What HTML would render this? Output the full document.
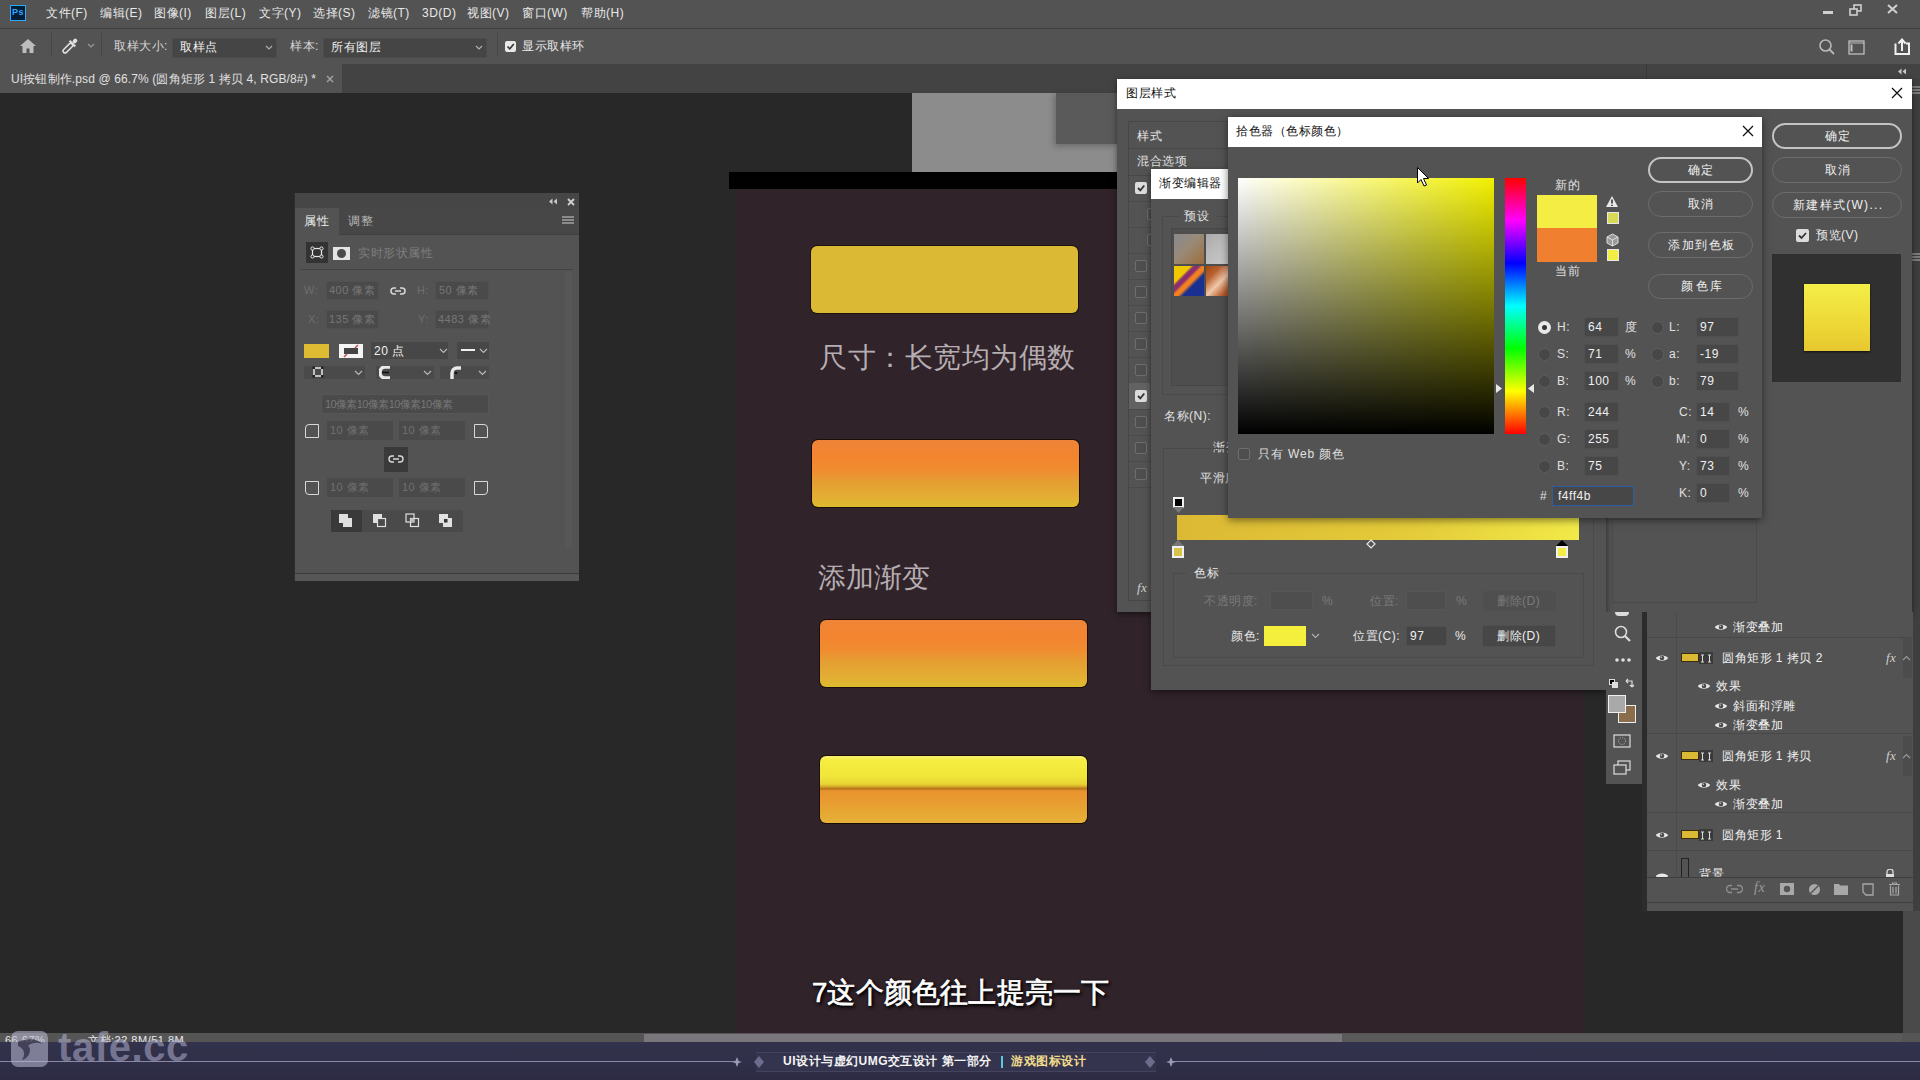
<!DOCTYPE html>
<html><head><meta charset="utf-8">
<style>
*{box-sizing:border-box;margin:0;padding:0}
html,body{width:1920px;height:1080px;overflow:hidden;background:#282828;font-family:"Liberation Sans",sans-serif;color:#e0e0e0}
.a{position:absolute}
.t{position:absolute;white-space:nowrap;line-height:1;letter-spacing:0.5px}
</style></head><body>
<!-- menubar -->
<div class="a" style="left:0;top:0;width:1920px;height:28px;background:#535353"></div>
<div class="a" style="left:0;top:28px;width:1920px;height:1px;background:#3d3d3d"></div>
<div class="a" style="left:0;top:29px;width:1920px;height:35px;background:#535353"></div>
<!-- tab bar -->
<div class="a" style="left:0;top:64px;width:1920px;height:29px;background:#434343"></div>
<div class="a" style="left:0;top:64px;width:342px;height:30px;background:#535353"></div>

<!-- PS logo -->
<div class="a" style="left:10px;top:5px;width:16px;height:16px;background:#001e36;border:1px solid #31a8ff"></div>
<div class="t" style="left:12px;top:8px;font-size:9px;color:#31a8ff;font-weight:bold">Ps</div>
<div class="t" style="left:46px;top:7px;font-size:12px;color:#e8e8e8">文件(F)</div>
<div class="t" style="left:100px;top:7px;font-size:12px;color:#e8e8e8">编辑(E)</div>
<div class="t" style="left:154px;top:7px;font-size:12px;color:#e8e8e8">图像(I)</div>
<div class="t" style="left:205px;top:7px;font-size:12px;color:#e8e8e8">图层(L)</div>
<div class="t" style="left:259px;top:7px;font-size:12px;color:#e8e8e8">文字(Y)</div>
<div class="t" style="left:313px;top:7px;font-size:12px;color:#e8e8e8">选择(S)</div>
<div class="t" style="left:368px;top:7px;font-size:12px;color:#e8e8e8">滤镜(T)</div>
<div class="t" style="left:422px;top:7px;font-size:12px;color:#e8e8e8">3D(D)</div>
<div class="t" style="left:467px;top:7px;font-size:12px;color:#e8e8e8">视图(V)</div>
<div class="t" style="left:522px;top:7px;font-size:12px;color:#e8e8e8">窗口(W)</div>
<div class="t" style="left:581px;top:7px;font-size:12px;color:#e8e8e8">帮助(H)</div>
<!-- window controls -->
<div class="a" style="left:1823px;top:11px;width:10px;height:3px;background:#d0d0d0"></div>
<svg class="a" style="left:1849px;top:4px" width="14" height="12"><rect x="5" y="1" width="7" height="6" fill="none" stroke="#d0d0d0" stroke-width="1.6"/><rect x="1" y="5" width="7" height="6" fill="#535353" stroke="#d0d0d0" stroke-width="1.6"/></svg>
<svg class="a" style="left:1887px;top:4px" width="11" height="10"><path d="M1 1L10 9M10 1L1 9" stroke="#d0d0d0" stroke-width="2"/></svg>
<!-- options bar -->
<svg class="a" style="left:19px;top:38px" width="18" height="16"><path d="M9 1L1 8H3.5V15H7.5V10.5H10.5V15H14.5V8H17Z" fill="#bdbdbd"/></svg>
<div class="a" style="left:51px;top:33px;width:1px;height:24px;background:#464646"></div>
<svg class="a" style="left:60px;top:36px" width="20" height="20"><g transform="rotate(45 10 10)"><rect x="8" y="7" width="4" height="12" rx="2" fill="none" stroke="#e0e0e0" stroke-width="1.5"/><rect x="6" y="5.5" width="8" height="2.2" fill="#e0e0e0"/><rect x="8" y="0.5" width="4" height="5" rx="2" fill="#e0e0e0"/></g></svg>
<svg class="a" style="left:87px;top:43px" width="8" height="6"><path d="M1 1L4 4L7 1" stroke="#9a9a9a" stroke-width="1.2" fill="none"/></svg>
<div class="a" style="left:101px;top:33px;width:1px;height:24px;background:#464646"></div>
<div class="t" style="left:114px;top:40px;font-size:12px;color:#d8d8d8">取样大小:</div>
<div class="a" style="left:172px;top:38px;width:105px;height:20px;background:#454545;border:1px solid #4c4c4c"></div>
<div class="t" style="left:180px;top:41px;font-size:12px;color:#f0f0f0">取样点</div>
<svg class="a" style="left:265px;top:45px" width="8" height="6"><path d="M1 1L4 4L7 1" stroke="#b0b0b0" stroke-width="1.2" fill="none"/></svg>
<div class="t" style="left:290px;top:40px;font-size:12px;color:#d8d8d8">样本:</div>
<div class="a" style="left:323px;top:38px;width:164px;height:20px;background:#454545;border:1px solid #4c4c4c"></div>
<div class="t" style="left:331px;top:41px;font-size:12px;color:#f0f0f0">所有图层</div>
<svg class="a" style="left:475px;top:45px" width="8" height="6"><path d="M1 1L4 4L7 1" stroke="#b0b0b0" stroke-width="1.2" fill="none"/></svg>
<div class="a" style="left:497px;top:33px;width:1px;height:24px;background:#464646"></div>
<div class="a" style="left:505px;top:41px;width:11px;height:11px;background:#e8e8e8;border-radius:2px"></div>
<svg class="a" style="left:506px;top:42px" width="9" height="9"><path d="M1.5 4.5L3.8 6.8L7.8 2" stroke="#333" stroke-width="1.6" fill="none"/></svg>
<div class="t" style="left:522px;top:40px;font-size:12px;color:#e8e8e8">显示取样环</div>
<svg class="a" style="left:1818px;top:38px" width="18" height="18"><circle cx="7.5" cy="7.5" r="5.5" stroke="#b8b8b8" stroke-width="1.6" fill="none"/><path d="M11.5 11.5L16 16" stroke="#b8b8b8" stroke-width="1.8"/></svg>
<svg class="a" style="left:1848px;top:40px" width="18" height="16"><rect x="1" y="1" width="15" height="13" stroke="#bdbdbd" stroke-width="1.3" fill="none"/><path d="M1 3H16" stroke="#bdbdbd" stroke-width="1"/><rect x="2.5" y="4.5" width="2" height="7" fill="#bdbdbd"/></svg>
<svg class="a" style="left:1892px;top:37px" width="20" height="19"><path d="M3.5 6.5V17H17V6.5H14" stroke="#f0f0f0" stroke-width="2" fill="none"/><path d="M10 14V3M6.5 6.5L10 2.5L13.5 6.5" stroke="#f0f0f0" stroke-width="2" fill="none"/></svg>
<!-- tab -->
<div class="t" style="left:11px;top:73px;font-size:12px;color:#e0e0e0;letter-spacing:0.13px">UI按钮制作.psd @ 66.7% (圆角矩形 1 拷贝 4, RGB/8#) *</div>
<svg class="a" style="left:326px;top:75px" width="8" height="8"><path d="M1 1L7 7M7 1L1 7" stroke="#a0a0a0" stroke-width="1.5"/></svg>

<!-- canvas bg -->
<div class="a" style="left:0;top:93px;width:1920px;height:940px;background:#282828"></div>
<!-- doc -->
<div class="a" style="left:735px;top:189px;width:848px;height:844px;background:#30232a"></div>
<div class="a" style="left:729px;top:172px;width:390px;height:17px;background:#020102"></div>
<div class="a" style="left:912px;top:93px;width:206px;height:79px;background:#8c8c8c"></div>
<div class="a" style="left:1056px;top:93px;width:62px;height:51px;background:#5a5a5a"></div>

<!-- doc content -->
<div class="a" style="left:1056px;top:93px;width:62px;height:51px;box-shadow:-2px 2px 6px rgba(0,0,0,.25)"></div>
<div class="a" style="left:810px;top:245px;width:269px;height:69px;border-radius:7px;background:#1c1210"></div>
<div class="a" style="left:811px;top:246px;width:267px;height:67px;border-radius:6px;background:#dcb934"></div>
<div class="t" style="left:819px;top:344px;font-size:28px;color:#b5adb1;letter-spacing:0.5px">尺寸：长宽均为偶数</div>
<div class="a" style="left:811px;top:439px;width:269px;height:69px;border-radius:7px;background:#1a0e0a"></div>
<div class="a" style="left:812px;top:440px;width:267px;height:67px;border-radius:6px;background:linear-gradient(#ef8438 0%,#f38530 25%,#f08c30 45%,#e59e32 62%,#e3ae34 85%,#dcbb2e 100%)"></div>
<div class="t" style="left:818px;top:564px;font-size:28px;color:#b5adb1;letter-spacing:0">添加渐变</div>
<div class="a" style="left:819px;top:619px;width:269px;height:69px;border-radius:7px;background:#1a0e0a"></div>
<div class="a" style="left:820px;top:620px;width:267px;height:67px;border-radius:6px;background:linear-gradient(#ef8438 0%,#f38530 25%,#f08c30 45%,#e59e32 62%,#e3ae34 85%,#dcbb2e 100%)"></div>
<div class="a" style="left:819px;top:755px;width:269px;height:69px;border-radius:7px;background:#1a0e08;filter:blur(0.6px)"></div>
<div class="a" style="left:820px;top:756px;width:267px;height:67px;border-radius:6px;background:linear-gradient(#f6f070 0%,#f6ee42 6%,#f1e63a 30%,#e8d434 42%,#dcb22a 45%,#b87c1e 48.5%,#c4801e 50%,#ea9430 52%,#e99a30 65%,#e6aa34 88%,#e6b23a 100%)"></div>
<div class="t" style="left:812px;top:979px;font-size:27.5px;font-weight:normal;-webkit-text-stroke:0.7px #fff;color:#fff;letter-spacing:0.2px;text-shadow:0 0 2px #000,2px 2px 3px #000,1px 2px 4px rgba(0,0,0,.8)">7这个颜色往上提亮一下</div>

<!-- properties panel -->
<div class="a" style="left:294px;top:193px;width:285px;height:388px;background:#535353"></div>
<div class="a" style="left:294px;top:193px;width:285px;height:15px;background:#464646"></div>
<div class="a" style="left:294px;top:208px;width:285px;height:27px;background:#474747"></div><div class="a" style="left:339px;top:234px;width:240px;height:1px;background:#3f3f3f"></div><div class="a" style="left:294px;top:193px;width:1px;height:388px;background:#2e2e2e"></div>
<div class="a" style="left:295px;top:208px;width:44px;height:27px;background:#535353"></div>
<svg class="a" style="left:548px;top:198px" width="10" height="7"><path d="M4.5 0.5L1 3.5L4.5 6.5ZM9 0.5L5.5 3.5L9 6.5Z" fill="#c8c8c8"/></svg>
<svg class="a" style="left:567px;top:198px" width="8" height="8"><path d="M1 1L7 7M7 1L1 7" stroke="#d0d0d0" stroke-width="1.8"/></svg>
<div class="t" style="left:304px;top:215px;font-size:12px;color:#f0f0f0">属性</div>
<div class="t" style="left:348px;top:215px;font-size:12px;color:#b8b8b8">调整</div>
<svg class="a" style="left:562px;top:216px" width="12" height="9"><path d="M0 1H12M0 4H12M0 7H12" stroke="#d0d0d0" stroke-width="1.2"/></svg>
<div class="a" style="left:306px;top:242px;width:22px;height:21px;background:#333"></div>
<svg class="a" style="left:310px;top:246px" width="14" height="13"><rect x="2.5" y="2.5" width="9" height="8" fill="none" stroke="#e8e8e8" stroke-width="1.2"/><g fill="#333" stroke="#e8e8e8" stroke-width="1"><circle cx="2.5" cy="2.5" r="1.6"/><circle cx="11.5" cy="2.5" r="1.6"/><circle cx="2.5" cy="10.5" r="1.6"/><circle cx="11.5" cy="10.5" r="1.6"/></g></svg>
<div class="a" style="left:333px;top:247px;width:17px;height:13px;background:#e4e4e4"></div>
<div class="a" style="left:337px;top:249px;width:9px;height:9px;border-radius:50%;background:#4a4a4a"></div>
<div class="t" style="left:358px;top:247px;font-size:12px;color:#7e7e7e">实时形状属性</div>
<div class="a" style="left:300px;top:269px;width:273px;height:1px;background:#444"></div>
<div class="a" style="left:565px;top:272px;width:7px;height:276px;background:#575757"></div>
<div class="t" style="left:304px;top:285px;font-size:11px;color:#6e6e6e">W:</div>
<div class="a" style="left:326px;top:281px;width:53px;height:19px;background:#4a4a4a;border:1px solid #505050"></div>
<div class="t" style="left:329px;top:285px;font-size:11px;color:#777">400 像素</div>
<svg class="a" style="left:390px;top:286px" width="16" height="10"><path d="M6 2H4A3 3 0 0 0 4 8H6M10 2H12A3 3 0 0 1 12 8H10M5 5H11" stroke="#d8d8d8" stroke-width="1.5" fill="none"/></svg>
<div class="t" style="left:417px;top:285px;font-size:11px;color:#6e6e6e">H:</div>
<div class="a" style="left:435px;top:281px;width:54px;height:19px;background:#4a4a4a;border:1px solid #505050"></div>
<div class="t" style="left:439px;top:285px;font-size:11px;color:#777">50 像素</div>
<div class="t" style="left:308px;top:314px;font-size:11px;color:#6e6e6e">X:</div>
<div class="a" style="left:326px;top:310px;width:53px;height:19px;background:#4a4a4a;border:1px solid #505050"></div>
<div class="t" style="left:329px;top:314px;font-size:11px;color:#777">135 像素</div>
<div class="t" style="left:418px;top:314px;font-size:11px;color:#6e6e6e">Y:</div>
<div class="a" style="left:435px;top:310px;width:54px;height:19px;background:#4a4a4a;border:1px solid #505050"></div>
<div class="t" style="left:438px;top:314px;font-size:11px;color:#777">4483 像素</div>
<div class="a" style="left:304px;top:344px;width:25px;height:14px;background:#dfbb33"></div>
<div class="a" style="left:339px;top:344px;width:24px;height:14px;background:#f4f4f4"></div>
<div class="a" style="left:344px;top:348px;width:14px;height:6px;background:#444"></div>
<svg class="a" style="left:339px;top:344px" width="24" height="14"><path d="M16 4L19 1M5 13L8 10" stroke="#c05050" stroke-width="1.5"/></svg>
<div class="a" style="left:371px;top:342px;width:77px;height:17px;background:#474747"></div>
<div class="t" style="left:374px;top:345px;font-size:12px;color:#f0f0f0">20 点</div>
<svg class="a" style="left:439px;top:348px" width="9" height="6"><path d="M1 1L4.5 4.5L8 1" stroke="#b8b8b8" stroke-width="1.2" fill="none"/></svg>
<div class="a" style="left:457px;top:342px;width:32px;height:17px;background:#474747"></div>
<div class="a" style="left:461px;top:349px;width:14px;height:2px;background:#f0f0f0"></div>
<svg class="a" style="left:479px;top:348px" width="9" height="6"><path d="M1 1L4.5 4.5L8 1" stroke="#b8b8b8" stroke-width="1.2" fill="none"/></svg>
<div class="a" style="left:304px;top:366px;width:61px;height:13px;background:#4a4a4a"></div>
<svg class="a" style="left:312px;top:366px" width="12" height="12"><rect x="2" y="2" width="8" height="8" fill="none" stroke="#e8e8e8" stroke-width="1.5"/><g fill="#222"><rect x="0.5" y="0.5" width="2.5" height="2.5"/><rect x="9" y="0.5" width="2.5" height="2.5"/><rect x="0.5" y="9" width="2.5" height="2.5"/><rect x="9" y="9" width="2.5" height="2.5"/></g></svg>
<svg class="a" style="left:354px;top:370px" width="9" height="6"><path d="M1 1L4.5 4.5L8 1" stroke="#b8b8b8" stroke-width="1.2" fill="none"/></svg>
<div class="a" style="left:376px;top:366px;width:58px;height:13px;background:#4a4a4a"></div>
<svg class="a" style="left:379px;top:366px" width="12" height="13"><path d="M11 1H6A5 5.5 0 0 0 6 12H11" fill="none" stroke="#e8e8e8" stroke-width="3.5"/><path d="M3 6.5H10" stroke="#111" stroke-width="1.5"/></svg>
<svg class="a" style="left:423px;top:370px" width="9" height="6"><path d="M1 1L4.5 4.5L8 1" stroke="#b8b8b8" stroke-width="1.2" fill="none"/></svg>
<div class="a" style="left:440px;top:366px;width:49px;height:13px;background:#4a4a4a"></div>
<svg class="a" style="left:450px;top:366px" width="12" height="13"><path d="M2 13V7A5 5 0 0 1 7 2H11" fill="none" stroke="#e8e8e8" stroke-width="3.5"/><circle cx="6" cy="7" r="1.3" fill="#111"/></svg>
<svg class="a" style="left:478px;top:370px" width="9" height="6"><path d="M1 1L4.5 4.5L8 1" stroke="#b8b8b8" stroke-width="1.2" fill="none"/></svg>
<div class="a" style="left:321px;top:394px;width:168px;height:20px;background:#4a4a4a;border:1px solid #575757"></div>
<div class="t" style="left:325px;top:399px;font-size:11px;color:#777;letter-spacing:-0.6px">10像素10像素10像素10像素</div>
<div class="a" style="left:305px;top:424px;width:14px;height:14px;border:1px solid #d8d8d8;border-radius:4px 0 0 0"></div>
<div class="a" style="left:327px;top:421px;width:66px;height:19px;background:#4a4a4a"></div>
<div class="t" style="left:330px;top:425px;font-size:11px;color:#707070">10 像素</div>
<div class="a" style="left:399px;top:421px;width:66px;height:19px;background:#4a4a4a"></div>
<div class="t" style="left:402px;top:425px;font-size:11px;color:#707070">10 像素</div>
<div class="a" style="left:474px;top:424px;width:14px;height:14px;border:1px solid #d8d8d8;border-radius:0 4px 0 0"></div>
<div class="a" style="left:384px;top:447px;width:24px;height:25px;background:#3a3a3a"></div>
<svg class="a" style="left:388px;top:454px" width="16" height="10"><path d="M6 2H4A3 3 0 0 0 4 8H6M10 2H12A3 3 0 0 1 12 8H10M5 5H11" stroke="#d8d8d8" stroke-width="1.4" fill="none"/></svg>
<div class="a" style="left:305px;top:481px;width:14px;height:14px;border:1px solid #d8d8d8;border-radius:0 0 0 4px"></div>
<div class="a" style="left:327px;top:478px;width:66px;height:19px;background:#4a4a4a"></div>
<div class="t" style="left:330px;top:482px;font-size:11px;color:#707070">10 像素</div>
<div class="a" style="left:399px;top:478px;width:66px;height:19px;background:#4a4a4a"></div>
<div class="t" style="left:402px;top:482px;font-size:11px;color:#707070">10 像素</div>
<div class="a" style="left:474px;top:481px;width:14px;height:14px;border:1px solid #d8d8d8;border-radius:0 0 4px 0"></div>
<div class="a" style="left:331px;top:510px;width:132px;height:22px;background:#4a4a4a"></div>
<div class="a" style="left:331px;top:510px;width:31px;height:22px;background:#3a3a3a"></div>
<svg class="a" style="left:338px;top:513px" width="16" height="16"><rect x="1" y="1" width="9" height="9" fill="#e0e0e0"/><rect x="5" y="5" width="9" height="9" fill="#e0e0e0"/></svg>
<svg class="a" style="left:372px;top:513px" width="16" height="16"><rect x="1" y="1" width="9" height="9" fill="#e0e0e0"/><rect x="5.5" y="5.5" width="8" height="8" fill="#4a4a4a" stroke="#e0e0e0" stroke-width="1.2"/></svg>
<svg class="a" style="left:405px;top:513px" width="16" height="16"><rect x="1" y="1" width="8" height="8" fill="none" stroke="#e0e0e0" stroke-width="1.2"/><rect x="5.5" y="5.5" width="8" height="8" fill="none" stroke="#e0e0e0" stroke-width="1.2"/><rect x="5.5" y="5.5" width="3.5" height="3.5" fill="#bbb"/></svg>
<svg class="a" style="left:438px;top:513px" width="16" height="16"><rect x="1" y="1" width="9" height="9" fill="#e0e0e0"/><rect x="5" y="5" width="9" height="9" fill="#e0e0e0"/><rect x="6" y="6" width="3.5" height="3.5" fill="#333"/></svg>
<div class="a" style="left:295px;top:573px;width:284px;height:1px;background:#3a3a3a"></div>
<div class="a" style="left:295px;top:574px;width:284px;height:7px;background:#575757"></div>
<!-- status -->
<div class="a" style="left:0;top:1033px;width:1920px;height:9px;background:#555"></div>
<div class="a" style="left:644px;top:1034px;width:698px;height:8px;background:#7a777c"></div>
<div class="a" style="left:1342px;top:1034px;width:560px;height:8px;background:#5a5a5a"></div>
<div class="t" style="left:5px;top:1035px;font-size:11px;color:#e8e8e8;height:7px;overflow:hidden">66.67%</div>
<div class="t" style="left:88px;top:1035px;font-size:11px;color:#e8e8e8;height:7px;overflow:hidden">文档:22.8M/51.8M</div>
<div class="a" style="left:0;top:1042px;width:1920px;height:38px;background:linear-gradient(#33324c,#302f48 60%,#2c2b43)"></div>
<div class="a" style="left:0;top:1061px;width:736px;height:1px;background:#8a88a8"></div>
<div class="a" style="left:1170px;top:1061px;width:750px;height:1px;background:#8a88a8"></div>
<div class="a" style="left:756px;top:1052px;width:400px;height:20px;background:#35344f;border-top:1px solid #44435e;border-bottom:1px solid #44435e"></div>
<svg class="a" style="left:731px;top:1056px" width="12" height="12"><path d="M6 1L8 6L6 11L4 6Z M1 6L6 4.5L11 6L6 7.5Z" fill="#9c9ab8"/></svg>
<svg class="a" style="left:752px;top:1055px" width="14" height="14"><path d="M7 1L12 7L7 13L2 7Z" fill="#6e6c8c"/></svg>
<svg class="a" style="left:1143px;top:1055px" width="14" height="14"><path d="M7 1L12 7L7 13L2 7Z" fill="#6e6c8c"/></svg>
<svg class="a" style="left:1165px;top:1056px" width="12" height="12"><path d="M6 1L8 6L6 11L4 6Z M1 6L6 4.5L11 6L6 7.5Z" fill="#9c9ab8"/></svg>
<div class="t" style="left:783px;top:1055px;font-size:12px;color:#f4f4f4;font-weight:bold">UI设计与虚幻UMG交互设计 第一部分</div>
<div class="a" style="left:1001px;top:1056px;width:2px;height:12px;background:#5cc8dc"></div>
<div class="t" style="left:1011px;top:1055px;font-size:12px;color:#f0dc8c;font-weight:bold">游戏图标设计</div>
<!-- watermark -->
<div class="a" style="left:11px;top:1031px;width:37px;height:36px;border-radius:7px;background:rgba(190,190,215,.55)"></div>
<svg class="a" style="left:14px;top:1036px" width="32" height="28"><path d="M4 6C12 2 24 2 28 8C24 6 18 6 14 10C18 12 16 22 8 24C12 18 10 12 4 10Z" fill="rgba(40,40,60,.7)"/></svg>
<div class="t" style="left:58px;top:1027px;font-size:40px;font-weight:bold;color:rgba(185,185,215,.5);letter-spacing:0.6px">tafe.cc</div>
<!-- right strip -->
<div class="a" style="left:1646px;top:64px;width:274px;height:15px;background:#434343"></div>
<div class="a" style="left:1646px;top:64px;width:1px;height:15px;background:#383838"></div>
<svg class="a" style="left:1897px;top:68px" width="10" height="7"><path d="M4.5 0.5L1 3.5L4.5 6.5ZM9 0.5L5.5 3.5L9 6.5Z" fill="#c8c8c8"/></svg>
<div class="a" style="left:1912px;top:79px;width:8px;height:954px;background:#3f3f3f"></div>
<svg class="a" style="left:1912px;top:86px" width="8" height="9"><path d="M0 1H8M0 4H8M0 7H8" stroke="#bbb" stroke-width="1"/></svg>
<svg class="a" style="left:1912px;top:253px" width="8" height="9"><path d="M0 1H8M0 4H8M0 7H8" stroke="#bbb" stroke-width="1"/></svg>
<div class="a" style="left:1646px;top:612px;width:1px;height:300px;background:#2f2f2f"></div>
<!-- layer style dialog -->
<div class="a" style="left:1117px;top:79px;width:795px;height:533px;background:#535353;box-shadow:0 2px 6px rgba(0,0,0,.5)"></div>
<div class="a" style="left:1117px;top:79px;width:795px;height:30px;background:#fff"></div>
<div class="t" style="left:1126px;top:87px;font-size:12px;color:#111">图层样式</div>
<svg class="a" style="left:1891px;top:87px" width="12" height="12"><path d="M1 1L11 11M11 1L1 11" stroke="#111" stroke-width="1.3"/></svg>
<!-- style list -->
<div class="a" style="left:1128px;top:121px;width:110px;height:480px;border:1px solid #474747;background:#535353"></div>
<div class="t" style="left:1137px;top:130px;font-size:12px;color:#e8e8e8">样式</div>
<div class="a" style="left:1129px;top:148px;width:108px;height:1px;background:#484848"></div>
<div class="t" style="left:1137px;top:155px;font-size:12px;color:#e0e0e0">混合选项</div>
<div class="a" style="left:1129px;top:175px;width:108px;height:1px;background:#484848"></div>
<div class="a" style="left:1129px;top:201px;width:108px;height:1px;background:#4a4a4a"></div>
<div class="a" style="left:1135px;top:182px;width:12px;height:12px;background:#dcdcdc;border-radius:2px"></div><svg class="a" style="left:1136px;top:183px" width="10" height="10"><path d="M2 5L4.3 7.3L8.3 2.5" stroke="#333" stroke-width="1.8" fill="none"/></svg>
<div class="a" style="left:1129px;top:227px;width:108px;height:1px;background:#4a4a4a"></div>
<div class="a" style="left:1147px;top:208px;width:12px;height:12px;border:1px solid #6e6e6e;border-radius:2px;background:#4e4e4e"></div>
<div class="a" style="left:1129px;top:253px;width:108px;height:1px;background:#4a4a4a"></div>
<div class="a" style="left:1147px;top:234px;width:12px;height:12px;border:1px solid #6e6e6e;border-radius:2px;background:#4e4e4e"></div>
<div class="a" style="left:1129px;top:279px;width:108px;height:1px;background:#4a4a4a"></div>
<div class="a" style="left:1135px;top:260px;width:12px;height:12px;border:1px solid #6e6e6e;border-radius:2px;background:#4e4e4e"></div>
<div class="a" style="left:1129px;top:305px;width:108px;height:1px;background:#4a4a4a"></div>
<div class="a" style="left:1135px;top:286px;width:12px;height:12px;border:1px solid #6e6e6e;border-radius:2px;background:#4e4e4e"></div>
<div class="a" style="left:1129px;top:331px;width:108px;height:1px;background:#4a4a4a"></div>
<div class="a" style="left:1135px;top:312px;width:12px;height:12px;border:1px solid #6e6e6e;border-radius:2px;background:#4e4e4e"></div>
<div class="a" style="left:1129px;top:357px;width:108px;height:1px;background:#4a4a4a"></div>
<div class="a" style="left:1135px;top:338px;width:12px;height:12px;border:1px solid #6e6e6e;border-radius:2px;background:#4e4e4e"></div>
<div class="a" style="left:1129px;top:383px;width:108px;height:1px;background:#4a4a4a"></div>
<div class="a" style="left:1135px;top:364px;width:12px;height:12px;border:1px solid #6e6e6e;border-radius:2px;background:#4e4e4e"></div>
<div class="a" style="left:1129px;top:409px;width:108px;height:1px;background:#4a4a4a"></div>
<div class="a" style="left:1135px;top:390px;width:12px;height:12px;background:#dcdcdc;border-radius:2px"></div><svg class="a" style="left:1136px;top:391px" width="10" height="10"><path d="M2 5L4.3 7.3L8.3 2.5" stroke="#333" stroke-width="1.8" fill="none"/></svg>
<div class="a" style="left:1129px;top:435px;width:108px;height:1px;background:#4a4a4a"></div>
<div class="a" style="left:1135px;top:416px;width:12px;height:12px;border:1px solid #6e6e6e;border-radius:2px;background:#4e4e4e"></div>
<div class="a" style="left:1129px;top:461px;width:108px;height:1px;background:#4a4a4a"></div>
<div class="a" style="left:1135px;top:442px;width:12px;height:12px;border:1px solid #6e6e6e;border-radius:2px;background:#4e4e4e"></div>
<div class="a" style="left:1129px;top:487px;width:108px;height:1px;background:#4a4a4a"></div>
<div class="a" style="left:1135px;top:468px;width:12px;height:12px;border:1px solid #6e6e6e;border-radius:2px;background:#4e4e4e"></div>
<div class="t" style="left:1137px;top:581px;font-size:13px;color:#d0d0d0;font-style:italic;font-family:'Liberation Serif',serif">fx</div>
<div class="a" style="left:1129px;top:383px;width:21px;height:26px;background:#626262"></div>
<div class="a" style="left:1135px;top:390px;width:12px;height:12px;background:#dcdcdc;border-radius:2px"></div><svg class="a" style="left:1136px;top:391px" width="10" height="10"><path d="M2 5L4.3 7.3L8.3 2.5" stroke="#333" stroke-width="1.8" fill="none"/></svg>
<!-- right column buttons -->
<div class="a" style="left:1772px;top:123px;width:130px;height:26px;border:2px solid #c4c4c4;border-radius:13px"></div>
<div class="t" style="left:1825px;top:130px;font-size:12px;color:#f0f0f0">确定</div>
<div class="a" style="left:1772px;top:157px;width:130px;height:26px;border:1.5px solid #6c6c6c;border-radius:13px"></div>
<div class="t" style="left:1825px;top:164px;font-size:12px;color:#f0f0f0">取消</div>
<div class="a" style="left:1772px;top:192px;width:130px;height:26px;border:1.5px solid #6c6c6c;border-radius:13px"></div>
<div class="t" style="left:1793px;top:199px;font-size:12px;color:#f0f0f0;letter-spacing:1.3px">新建样式(W)...</div>
<div class="a" style="left:1796px;top:229px;width:13px;height:13px;background:#dcdcdc;border-radius:2px"></div>
<svg class="a" style="left:1797px;top:230px" width="11" height="11"><path d="M2 5.5L4.5 8L9 3" stroke="#333" stroke-width="1.8" fill="none"/></svg>
<div class="t" style="left:1816px;top:229px;font-size:12px;color:#e8e8e8">预览(V)</div>
<div class="a" style="left:1772px;top:254px;width:129px;height:128px;background:#303030"></div>
<div class="a" style="left:1804px;top:284px;width:66px;height:67px;background:linear-gradient(#f4ee48,#ecd434 70%,#e6c830);box-shadow:0 1px 2px #111"></div>
<div class="a" style="left:1612px;top:519px;width:145px;height:84px;border:1px solid #4b4b4b"></div>
<!-- gradient editor -->
<div class="a" style="left:1151px;top:169px;width:455px;height:521px;background:#535353;box-shadow:0 2px 6px rgba(0,0,0,.5)"></div>
<div class="a" style="left:1151px;top:169px;width:455px;height:30px;background:#fff"></div>
<div class="t" style="left:1159px;top:177px;font-size:12px;color:#111">渐变编辑器</div>
<div class="a" style="left:1162px;top:216px;width:80px;height:179px;border:1px solid #4a4a4a"></div>
<div class="a" style="left:1179px;top:212px;width:38px;height:10px;background:#535353"></div>
<div class="t" style="left:1184px;top:210px;font-size:12px;color:#e0e0e0">预设</div>
<div class="a" style="left:1171px;top:228px;width:70px;height:158px;background:#4e4e4e;border:1px solid #474747"></div>
<div class="a" style="left:1174px;top:234px;width:30px;height:30px;background:linear-gradient(135deg,#8a8a8a 10%,#9a8a78 45%,#9c7040 95%)"></div>
<div class="a" style="left:1206px;top:234px;width:30px;height:30px;background:linear-gradient(135deg,#aaa 0%,#bbb 40%,rgba(220,220,220,.9) 100%)"></div>
<div class="a" style="left:1174px;top:266px;width:30px;height:30px;background:linear-gradient(135deg,#f0c800 0%,#f0c800 28%,#8a3070 34%,#8a3070 42%,#f08020 48%,#f08020 56%,#1a3090 64%,#1a3090 100%)"></div>
<div class="a" style="left:1206px;top:266px;width:30px;height:30px;background:linear-gradient(135deg,#a04810 0%,#b86030 25%,#f0c8a8 50%,#b86030 75%,#8a3c10 100%)"></div>
<div class="t" style="left:1164px;top:410px;font-size:12px;color:#e0e0e0">名称(N):</div>
<div class="t" style="left:1213px;top:441px;font-size:12px;color:#e0e0e0">渐变类型</div>
<div class="t" style="left:1200px;top:472px;font-size:12px;color:#e0e0e0">平滑度</div>
<div class="a" style="left:1163px;top:448px;width:431px;height:1px;background:#4a4a4a"></div>
<div class="a" style="left:1163px;top:448px;width:1px;height:218px;background:#4a4a4a"></div>
<div class="a" style="left:1163px;top:665px;width:431px;height:1px;background:#4a4a4a"></div>
<div class="a" style="left:1593px;top:448px;width:1px;height:218px;background:#4a4a4a"></div>
<!-- gradient bar -->
<div class="a" style="left:1177px;top:515px;width:402px;height:25px;background:linear-gradient(90deg,#dcb934,#e4cc3a 60%,#f2ea48)"></div>
<div class="a" style="left:1173px;top:497px;width:11px;height:11px;background:#000;border:2px solid #f0f0f0"></div>
<svg class="a" style="left:1173px;top:507px" width="11" height="8"><path d="M0 0H11L5.5 6Z" fill="#777"/></svg>
<svg class="a" style="left:1172px;top:540px" width="12" height="6"><path d="M0 6H12L6 0Z" fill="#777"/></svg>
<div class="a" style="left:1172px;top:546px;width:12px;height:12px;background:#d8c24a;border:2px solid #f0f0f0"></div>
<svg class="a" style="left:1366px;top:539px" width="10" height="10"><path d="M5 1L9 5L5 9L1 5Z" fill="none" stroke="#e8e8e8" stroke-width="1.2"/></svg>
<svg class="a" style="left:1556px;top:540px" width="12" height="6"><path d="M0 6H12L6 0Z" fill="#000"/></svg>
<div class="a" style="left:1556px;top:546px;width:12px;height:12px;background:#f4ee44;border:2px solid #f0f0f0"></div>
<!-- 色标 group -->
<div class="a" style="left:1173px;top:573px;width:411px;height:85px;border:1px solid #4a4a4a"></div>
<div class="a" style="left:1186px;top:566px;width:40px;height:14px;background:#535353"></div>
<div class="t" style="left:1194px;top:567px;font-size:12px;color:#e8e8e8">色标</div>
<div class="t" style="left:1204px;top:595px;font-size:12px;color:#7a7a7a">不透明度:</div>
<div class="a" style="left:1270px;top:591px;width:43px;height:19px;background:#4e4e4e;border:1px solid #565656"></div>
<div class="t" style="left:1322px;top:595px;font-size:12px;color:#7a7a7a">%</div>
<div class="t" style="left:1370px;top:595px;font-size:12px;color:#7a7a7a">位置:</div>
<div class="a" style="left:1406px;top:591px;width:40px;height:19px;background:#4e4e4e;border:1px solid #565656"></div>
<div class="t" style="left:1456px;top:595px;font-size:12px;color:#7a7a7a">%</div>
<div class="a" style="left:1483px;top:591px;width:73px;height:20px;background:#4f4f4f"></div>
<div class="t" style="left:1497px;top:595px;font-size:12px;color:#7a7a7a">删除(D)</div>
<div class="t" style="left:1231px;top:630px;font-size:12px;color:#e8e8e8">颜色:</div>
<div class="a" style="left:1264px;top:626px;width:42px;height:20px;background:#f4ee3c"></div>
<svg class="a" style="left:1311px;top:633px" width="9" height="6"><path d="M1 1L4.5 4.5L8 1" stroke="#b0b0b0" stroke-width="1.2" fill="none"/></svg>
<div class="t" style="left:1353px;top:630px;font-size:12px;color:#e8e8e8">位置(C):</div>
<div class="a" style="left:1406px;top:626px;width:41px;height:20px;background:#454545;border:1px solid #4f4f4f"></div>
<div class="t" style="left:1410px;top:630px;font-size:12px;color:#f0f0f0">97</div>
<div class="t" style="left:1455px;top:630px;font-size:12px;color:#e8e8e8">%</div>
<div class="a" style="left:1482px;top:625px;width:74px;height:22px;background:#474747;border:1px solid #4f4f4f"></div>
<div class="t" style="left:1497px;top:630px;font-size:12px;color:#f0f0f0">删除(D)</div>
<!-- color picker -->
<div class="a" style="left:1228px;top:117px;width:534px;height:401px;background:#535353;box-shadow:0 2px 8px rgba(0,0,0,.5)"></div>
<div class="a" style="left:1228px;top:117px;width:534px;height:30px;background:#fff"></div>
<div class="t" style="left:1236px;top:125px;font-size:12px;color:#111">拾色器（色标颜色）</div>
<svg class="a" style="left:1742px;top:125px" width="12" height="12"><path d="M1 1L11 11M11 1L1 11" stroke="#111" stroke-width="1.3"/></svg>
<div class="a" style="left:1238px;top:178px;width:256px;height:256px;background:linear-gradient(to bottom,rgba(0,0,0,0),#000),linear-gradient(to right,#fff,#f2f000)"></div>
<div class="a" style="left:1505px;top:178px;width:21px;height:256px;background:linear-gradient(#ff0000 0%,#ff00ff 16.67%,#0000ff 33.33%,#00ffff 50%,#00ff00 66.67%,#ffff00 83.33%,#ff0000 100%)"></div>
<svg class="a" style="left:1496px;top:384px" width="7" height="9"><path d="M0 0L6 4.5L0 9Z" fill="#e8e8e8"/></svg>
<svg class="a" style="left:1527px;top:384px" width="7" height="9"><path d="M7 0L1 4.5L7 9Z" fill="#e8e8e8"/></svg>
<svg class="a" style="left:1416px;top:166px" width="14" height="22"><path d="M1.5 1.5V17L5 13.5L8 20L10.5 19L7.5 12.5H12.5Z" fill="#fff" stroke="#000" stroke-width="1"/></svg>
<div class="a" style="left:1238px;top:448px;width:12px;height:12px;border:1px solid #6e6e6e;border-radius:2px;background:#4e4e4e"></div>
<div class="t" style="left:1258px;top:448px;font-size:12px;color:#e0e0e0;letter-spacing:0.9px">只有 Web 颜色</div>
<div class="t" style="left:1555px;top:179px;font-size:12px;color:#e0e0e0">新的</div>
<div class="a" style="left:1537px;top:195px;width:60px;height:33px;background:#f4ee44"></div>
<div class="a" style="left:1537px;top:228px;width:60px;height:34px;background:#f08030"></div>
<div class="t" style="left:1555px;top:265px;font-size:12px;color:#e0e0e0">当前</div>
<svg class="a" style="left:1605px;top:195px" width="14" height="13"><path d="M7 1L13 12H1Z" fill="#e8e8e8"/><path d="M7 4.5V8.5M7 9.8V11" stroke="#333" stroke-width="1.6"/></svg>
<div class="a" style="left:1607px;top:212px;width:12px;height:12px;background:#d8da56;border:1px solid #e8e8e8"></div>
<svg class="a" style="left:1606px;top:233px" width="13" height="14"><path d="M6.5 1L12 4V10L6.5 13L1 10V4Z" fill="#9a9a9a" stroke="#dcdcdc" stroke-width="1"/><path d="M1 4L6.5 7L12 4M6.5 7V13" stroke="#dcdcdc" stroke-width="1" fill="none"/></svg>
<div class="a" style="left:1607px;top:249px;width:12px;height:12px;background:#f4ee44;border:1px solid #e8e8e8"></div>
<div class="a" style="left:1648px;top:157px;width:105px;height:26px;border:2px solid #c4c4c4;border-radius:13px"></div>
<div class="t" style="left:1688px;top:164px;font-size:12px;color:#f0f0f0">确定</div>
<div class="a" style="left:1648px;top:191px;width:105px;height:26px;border:1.5px solid #6c6c6c;border-radius:13px"></div>
<div class="t" style="left:1688px;top:198px;font-size:12px;color:#f0f0f0">取消</div>
<div class="a" style="left:1648px;top:232px;width:105px;height:26px;border:1.5px solid #6c6c6c;border-radius:13px"></div>
<div class="t" style="left:1668px;top:239px;font-size:12px;color:#f0f0f0;letter-spacing:1.5px">添加到色板</div>
<div class="a" style="left:1648px;top:274px;width:105px;height:25px;border:1.5px solid #6c6c6c;border-radius:13px"></div>
<div class="t" style="left:1681px;top:280px;font-size:12px;color:#f0f0f0;letter-spacing:2.5px">颜色库</div>
<div class="a" style="left:1538px;top:321px;width:13px;height:13px;border-radius:50%;background:#e8e8e8"></div><div class="a" style="left:1542px;top:325px;width:5px;height:5px;border-radius:50%;background:#333"></div>
<div class="t" style="left:1557px;top:321px;font-size:12px;color:#e0e0e0">H:</div>
<div class="a" style="left:1584px;top:317px;width:35px;height:20px;background:#474747;border:1px solid #505050"></div><div class="t" style="left:1588px;top:321px;font-size:12px;color:#f0f0f0">64</div>
<div class="t" style="left:1625px;top:321px;font-size:12px;color:#e0e0e0">度</div>
<div class="a" style="left:1651px;top:321px;width:13px;height:13px;border-radius:50%;background:#474747;border:1px solid #5e5e5e"></div>
<div class="t" style="left:1669px;top:321px;font-size:12px;color:#e0e0e0">L:</div>
<div class="a" style="left:1696px;top:317px;width:43px;height:20px;background:#474747;border:1px solid #505050"></div><div class="t" style="left:1700px;top:321px;font-size:12px;color:#f0f0f0">97</div>
<div class="a" style="left:1538px;top:348px;width:13px;height:13px;border-radius:50%;background:#474747;border:1px solid #5e5e5e"></div>
<div class="t" style="left:1557px;top:348px;font-size:12px;color:#e0e0e0">S:</div>
<div class="a" style="left:1584px;top:344px;width:35px;height:20px;background:#474747;border:1px solid #505050"></div><div class="t" style="left:1588px;top:348px;font-size:12px;color:#f0f0f0">71</div>
<div class="t" style="left:1625px;top:348px;font-size:12px;color:#e0e0e0">%</div>
<div class="a" style="left:1651px;top:348px;width:13px;height:13px;border-radius:50%;background:#474747;border:1px solid #5e5e5e"></div>
<div class="t" style="left:1669px;top:348px;font-size:12px;color:#e0e0e0">a:</div>
<div class="a" style="left:1696px;top:344px;width:43px;height:20px;background:#474747;border:1px solid #505050"></div><div class="t" style="left:1700px;top:348px;font-size:12px;color:#f0f0f0">-19</div>
<div class="a" style="left:1538px;top:375px;width:13px;height:13px;border-radius:50%;background:#474747;border:1px solid #5e5e5e"></div>
<div class="t" style="left:1557px;top:375px;font-size:12px;color:#e0e0e0">B:</div>
<div class="a" style="left:1584px;top:371px;width:35px;height:20px;background:#474747;border:1px solid #505050"></div><div class="t" style="left:1588px;top:375px;font-size:12px;color:#f0f0f0">100</div>
<div class="t" style="left:1625px;top:375px;font-size:12px;color:#e0e0e0">%</div>
<div class="a" style="left:1651px;top:375px;width:13px;height:13px;border-radius:50%;background:#474747;border:1px solid #5e5e5e"></div>
<div class="t" style="left:1669px;top:375px;font-size:12px;color:#e0e0e0">b:</div>
<div class="a" style="left:1696px;top:371px;width:43px;height:20px;background:#474747;border:1px solid #505050"></div><div class="t" style="left:1700px;top:375px;font-size:12px;color:#f0f0f0">79</div>
<div class="a" style="left:1538px;top:406px;width:13px;height:13px;border-radius:50%;background:#474747;border:1px solid #5e5e5e"></div>
<div class="t" style="left:1557px;top:406px;font-size:12px;color:#e0e0e0">R:</div>
<div class="a" style="left:1584px;top:402px;width:35px;height:20px;background:#474747;border:1px solid #505050"></div><div class="t" style="left:1588px;top:406px;font-size:12px;color:#f0f0f0">244</div>
<div class="t" style="left:1679px;top:406px;font-size:12px;color:#e0e0e0">C:</div>
<div class="a" style="left:1696px;top:402px;width:34px;height:20px;background:#474747;border:1px solid #505050"></div><div class="t" style="left:1700px;top:406px;font-size:12px;color:#f0f0f0">14</div>
<div class="t" style="left:1738px;top:406px;font-size:12px;color:#e0e0e0">%</div>
<div class="a" style="left:1538px;top:433px;width:13px;height:13px;border-radius:50%;background:#474747;border:1px solid #5e5e5e"></div>
<div class="t" style="left:1557px;top:433px;font-size:12px;color:#e0e0e0">G:</div>
<div class="a" style="left:1584px;top:429px;width:35px;height:20px;background:#474747;border:1px solid #505050"></div><div class="t" style="left:1588px;top:433px;font-size:12px;color:#f0f0f0">255</div>
<div class="t" style="left:1676px;top:433px;font-size:12px;color:#e0e0e0">M:</div>
<div class="a" style="left:1696px;top:429px;width:34px;height:20px;background:#474747;border:1px solid #505050"></div><div class="t" style="left:1700px;top:433px;font-size:12px;color:#f0f0f0">0</div>
<div class="t" style="left:1738px;top:433px;font-size:12px;color:#e0e0e0">%</div>
<div class="a" style="left:1538px;top:460px;width:13px;height:13px;border-radius:50%;background:#474747;border:1px solid #5e5e5e"></div>
<div class="t" style="left:1557px;top:460px;font-size:12px;color:#e0e0e0">B:</div>
<div class="a" style="left:1584px;top:456px;width:35px;height:20px;background:#474747;border:1px solid #505050"></div><div class="t" style="left:1588px;top:460px;font-size:12px;color:#f0f0f0">75</div>
<div class="t" style="left:1679px;top:460px;font-size:12px;color:#e0e0e0">Y:</div>
<div class="a" style="left:1696px;top:456px;width:34px;height:20px;background:#474747;border:1px solid #505050"></div><div class="t" style="left:1700px;top:460px;font-size:12px;color:#f0f0f0">73</div>
<div class="t" style="left:1738px;top:460px;font-size:12px;color:#e0e0e0">%</div>
<div class="t" style="left:1540px;top:490px;font-size:12px;color:#e0e0e0">#</div>
<div class="a" style="left:1552px;top:486px;width:82px;height:20px;background:#474747;border:1.5px solid #2e5da6"></div><div class="t" style="left:1558px;top:490px;font-size:12px;color:#f0f0f0">f4ff4b</div>
<div class="t" style="left:1679px;top:487px;font-size:12px;color:#e0e0e0">K:</div>
<div class="a" style="left:1696px;top:483px;width:34px;height:20px;background:#474747;border:1px solid #505050"></div><div class="t" style="left:1700px;top:487px;font-size:12px;color:#f0f0f0">0</div>
<div class="t" style="left:1738px;top:487px;font-size:12px;color:#e0e0e0">%</div>
<!-- layers panel -->
<div class="a" style="left:1903px;top:911px;width:17px;height:122px;background:#4a4a4a"></div>

<div class="a" style="left:1606px;top:612px;width:36px;height:172px;background:#535353"></div>
<div class="a" style="left:1642px;top:612px;width:5px;height:300px;background:#2c2c2c"></div>
<div class="a" style="left:1647px;top:612px;width:266px;height:299px;background:#535353"></div>
<div class="a" style="left:1676px;top:612px;width:1px;height:265px;background:#4b4b4b"></div>
<div class="a" style="left:1615px;top:612px;width:14px;height:4px;background:#dcdcdc;border-radius:0 0 4px 4px"></div>
<svg class="a" style="left:1614px;top:625px" width="18" height="18"><circle cx="7" cy="7" r="5.5" stroke="#dcdcdc" stroke-width="1.6" fill="none"/><path d="M11 11L16 16" stroke="#dcdcdc" stroke-width="2.2"/></svg>
<svg class="a" style="left:1614px;top:657px" width="18" height="6"><circle cx="3" cy="3" r="1.8" fill="#e0e0e0"/><circle cx="9" cy="3" r="1.8" fill="#e0e0e0"/><circle cx="15" cy="3" r="1.8" fill="#e0e0e0"/></svg>
<div class="a" style="left:1609px;top:679px;width:6px;height:6px;background:#000;border:1px solid #ddd"></div><div class="a" style="left:1612px;top:682px;width:6px;height:6px;background:#ddd"></div>
<svg class="a" style="left:1624px;top:678px" width="11" height="11"><path d="M2 3H8V9M2 3L4 1M2 3L4 5M8 9L6 7M8 9L10 7" stroke="#ddd" stroke-width="1.2" fill="none"/></svg>
<div class="a" style="left:1618px;top:705px;width:18px;height:18px;background:#8a6e4c;border:1px solid #eee"></div>
<div class="a" style="left:1608px;top:695px;width:18px;height:18px;background:#a9a9a9;border:1px solid #f0f0f0"></div>
<svg class="a" style="left:1613px;top:734px" width="18" height="14"><rect x="1" y="1" width="16" height="12" fill="none" stroke="#ddd" stroke-width="1.2"/><circle cx="9" cy="7" r="3.5" fill="none" stroke="#aaa" stroke-dasharray="1 1"/></svg>
<svg class="a" style="left:1613px;top:760px" width="18" height="15"><rect x="5" y="1" width="12" height="9" fill="#535353" stroke="#ddd" stroke-width="1.2"/><rect x="1" y="5" width="12" height="9" fill="#535353" stroke="#ddd" stroke-width="1.2"/></svg>
<svg class="a" style="left:1714px;top:622px" width="14" height="10"><path d="M0.8 5C3 1.5 11 1.5 13.2 5C11 8.5 3 8.5 0.8 5Z" fill="#e8e8e8"/><circle cx="7" cy="5" r="2.3" fill="#4a4a4a"/><circle cx="6.3" cy="4.3" r="0.8" fill="#ccc"/></svg>
<div class="t" style="left:1733px;top:621px;font-size:12px;color:#f0f0f0">渐变叠加</div>
<div class="a" style="left:1647px;top:637px;width:266px;height:1px;background:#484848"></div>
<svg class="a" style="left:1655px;top:653px" width="14" height="10"><path d="M0.8 5C3 1.5 11 1.5 13.2 5C11 8.5 3 8.5 0.8 5Z" fill="#e8e8e8"/><circle cx="7" cy="5" r="2.3" fill="#4a4a4a"/><circle cx="6.3" cy="4.3" r="0.8" fill="#ccc"/></svg>
<div class="a" style="left:1681px;top:653px;width:18px;height:9px;background:#dcb934;border:1px solid #3a2a10"></div><div class="a" style="left:1699px;top:652px;width:14px;height:12px;background:#3a3a3a"></div><svg class="a" style="left:1700px;top:654px" width="12" height="9"><path d="M1 1H4M2.5 1V8M1 8H4M8 1H11M9.5 1V8M8 8H11" stroke="#ddd" stroke-width="1"/></svg>
<div class="t" style="left:1722px;top:652px;font-size:12px;color:#f0f0f0">圆角矩形 1 拷贝 2</div>
<div class="t" style="left:1886px;top:651px;font-size:13px;color:#cfcfcf;font-style:italic;font-family:'Liberation Serif',serif">fx</div><svg class="a" style="left:1902px;top:655px;z-index:2" width="9" height="6"><path d="M1 5L4.5 1.5L8 5" stroke="#9a9a9a" stroke-width="1.1" fill="none"/></svg>
<div class="a" style="left:1903px;top:638px;width:9px;height:40px;background:#4c4c4c"></div>
<svg class="a" style="left:1697px;top:681px" width="14" height="10"><path d="M0.8 5C3 1.5 11 1.5 13.2 5C11 8.5 3 8.5 0.8 5Z" fill="#e8e8e8"/><circle cx="7" cy="5" r="2.3" fill="#4a4a4a"/><circle cx="6.3" cy="4.3" r="0.8" fill="#ccc"/></svg>
<div class="t" style="left:1716px;top:680px;font-size:12px;color:#f0f0f0">效果</div>
<svg class="a" style="left:1714px;top:701px" width="14" height="10"><path d="M0.8 5C3 1.5 11 1.5 13.2 5C11 8.5 3 8.5 0.8 5Z" fill="#e8e8e8"/><circle cx="7" cy="5" r="2.3" fill="#4a4a4a"/><circle cx="6.3" cy="4.3" r="0.8" fill="#ccc"/></svg>
<div class="t" style="left:1733px;top:700px;font-size:12px;color:#f0f0f0">斜面和浮雕</div>
<svg class="a" style="left:1714px;top:720px" width="14" height="10"><path d="M0.8 5C3 1.5 11 1.5 13.2 5C11 8.5 3 8.5 0.8 5Z" fill="#e8e8e8"/><circle cx="7" cy="5" r="2.3" fill="#4a4a4a"/><circle cx="6.3" cy="4.3" r="0.8" fill="#ccc"/></svg>
<div class="t" style="left:1733px;top:719px;font-size:12px;color:#f0f0f0">渐变叠加</div>
<div class="a" style="left:1647px;top:733px;width:266px;height:1px;background:#484848"></div>
<svg class="a" style="left:1655px;top:751px" width="14" height="10"><path d="M0.8 5C3 1.5 11 1.5 13.2 5C11 8.5 3 8.5 0.8 5Z" fill="#e8e8e8"/><circle cx="7" cy="5" r="2.3" fill="#4a4a4a"/><circle cx="6.3" cy="4.3" r="0.8" fill="#ccc"/></svg>
<div class="a" style="left:1681px;top:751px;width:18px;height:9px;background:#dcb934;border:1px solid #3a2a10"></div><div class="a" style="left:1699px;top:750px;width:14px;height:12px;background:#3a3a3a"></div><svg class="a" style="left:1700px;top:752px" width="12" height="9"><path d="M1 1H4M2.5 1V8M1 8H4M8 1H11M9.5 1V8M8 8H11" stroke="#ddd" stroke-width="1"/></svg>
<div class="t" style="left:1722px;top:750px;font-size:12px;color:#f0f0f0">圆角矩形 1 拷贝</div>
<div class="t" style="left:1886px;top:749px;font-size:13px;color:#cfcfcf;font-style:italic;font-family:'Liberation Serif',serif">fx</div><svg class="a" style="left:1902px;top:753px;z-index:2" width="9" height="6"><path d="M1 5L4.5 1.5L8 5" stroke="#9a9a9a" stroke-width="1.1" fill="none"/></svg>
<div class="a" style="left:1903px;top:736px;width:9px;height:40px;background:#4c4c4c"></div>
<svg class="a" style="left:1697px;top:780px" width="14" height="10"><path d="M0.8 5C3 1.5 11 1.5 13.2 5C11 8.5 3 8.5 0.8 5Z" fill="#e8e8e8"/><circle cx="7" cy="5" r="2.3" fill="#4a4a4a"/><circle cx="6.3" cy="4.3" r="0.8" fill="#ccc"/></svg>
<div class="t" style="left:1716px;top:779px;font-size:12px;color:#f0f0f0">效果</div>
<svg class="a" style="left:1714px;top:799px" width="14" height="10"><path d="M0.8 5C3 1.5 11 1.5 13.2 5C11 8.5 3 8.5 0.8 5Z" fill="#e8e8e8"/><circle cx="7" cy="5" r="2.3" fill="#4a4a4a"/><circle cx="6.3" cy="4.3" r="0.8" fill="#ccc"/></svg>
<div class="t" style="left:1733px;top:798px;font-size:12px;color:#f0f0f0">渐变叠加</div>
<div class="a" style="left:1647px;top:812px;width:266px;height:1px;background:#484848"></div>
<svg class="a" style="left:1655px;top:830px" width="14" height="10"><path d="M0.8 5C3 1.5 11 1.5 13.2 5C11 8.5 3 8.5 0.8 5Z" fill="#e8e8e8"/><circle cx="7" cy="5" r="2.3" fill="#4a4a4a"/><circle cx="6.3" cy="4.3" r="0.8" fill="#ccc"/></svg>
<div class="a" style="left:1681px;top:830px;width:18px;height:9px;background:#dcb934;border:1px solid #3a2a10"></div><div class="a" style="left:1699px;top:829px;width:14px;height:12px;background:#3a3a3a"></div><svg class="a" style="left:1700px;top:831px" width="12" height="9"><path d="M1 1H4M2.5 1V8M1 8H4M8 1H11M9.5 1V8M8 8H11" stroke="#ddd" stroke-width="1"/></svg>
<div class="t" style="left:1722px;top:829px;font-size:12px;color:#f0f0f0">圆角矩形 1</div>
<div class="a" style="left:1647px;top:850px;width:266px;height:1px;background:#484848"></div>
<div class="a" style="left:1681px;top:858px;width:8px;height:20px;border:1px solid #222;border-bottom:none"></div>
<div class="a" style="left:1647px;top:862px;width:266px;height:15px;overflow:hidden"><div class="t" style="left:52px;top:6px;font-size:12px;color:#f0f0f0">背景</div><svg class="a" style="left:8px;top:9px" width="14" height="10"><path d="M0.8 5C3 1.5 11 1.5 13.2 5C11 8.5 3 8.5 0.8 5Z" fill="#e8e8e8"/></svg><svg class="a" style="left:238px;top:7px" width="10" height="10"><path d="M2 5V3A3 3 0 0 1 8 3V5" stroke="#ddd" stroke-width="1.3" fill="none"/><rect x="1" y="5" width="8" height="5" fill="#ddd"/></svg></div>
<div class="a" style="left:1647px;top:877px;width:266px;height:1px;background:#3e3e3e"></div>
<div class="a" style="left:1647px;top:902px;width:266px;height:1px;background:#3e3e3e"></div>
<svg class="a" style="left:1726px;top:884px" width="17" height="10"><path d="M6 1.5H4A3.5 3.5 0 0 0 4 8.5H6M11 1.5H13A3.5 3.5 0 0 1 13 8.5H11M5 5H12" stroke="#8e8e8e" stroke-width="1.4" fill="none"/></svg>
<div class="t" style="left:1754px;top:881px;font-size:14px;color:#9a9a9a;font-style:italic;font-family:'Liberation Serif',serif">fx</div>
<svg class="a" style="left:1780px;top:883px" width="14" height="12"><rect x="0" y="0" width="14" height="12" fill="#a8a8a8"/><circle cx="7" cy="6" r="3.2" fill="#535353"/></svg>
<svg class="a" style="left:1808px;top:883px" width="13" height="13"><circle cx="6.5" cy="6.5" r="5.5" fill="#a8a8a8"/><path d="M10.5 2.5L2.5 10.5" stroke="#535353" stroke-width="1.4"/></svg>
<svg class="a" style="left:1834px;top:883px" width="14" height="12"><path d="M0 1H5L6 2.5H14V12H0Z" fill="#a8a8a8"/></svg>
<svg class="a" style="left:1862px;top:883px" width="12" height="13"><path d="M1 1H11V12H4L1 9Z" fill="none" stroke="#a8a8a8" stroke-width="1.3"/></svg>
<svg class="a" style="left:1888px;top:882px" width="13" height="14"><path d="M1 2.5H12M4.5 2.5V1H8.5V2.5M2.5 3.5V13H10.5V3.5M5 5V11.5M8 5V11.5" stroke="#a8a8a8" stroke-width="1.2" fill="none"/></svg>
</body></html>
